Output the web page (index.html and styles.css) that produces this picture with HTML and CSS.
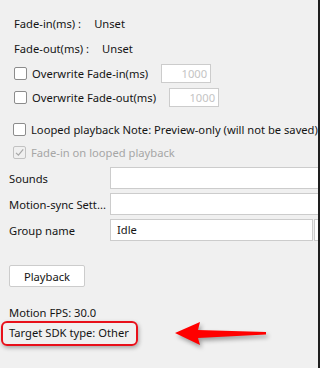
FILE: index.html
```html
<!DOCTYPE html>
<html lang="en">
<head>
  <meta charset="UTF-8">
  <meta name="viewport" content="width=device-width, initial-scale=1.0">
  <title>Motion settings</title>
  <link rel="stylesheet" href="styles.css">
</head>
<body>
  <div class="window">
    <div class="info-row"><span class="info-label">Fade-in(ms) :</span><span>Unset</span></div>
    <div class="info-row"><span class="info-label">Fade-out(ms) :</span><span>Unset</span></div>

    <div class="check-row">
      <span class="check"></span>
      <span class="check-label">Overwrite Fade-in(ms)</span>
      <span class="num-input">1000</span>
    </div>
    <div class="check-row">
      <span class="check"></span>
      <span class="check-label">Overwrite Fade-out(ms)</span>
      <span class="num-input">1000</span>
    </div>

    <div class="option-rows">
      <div class="option-row">
        <span class="check"></span>
        <span class="check-label">Looped playback Note: Preview-only (will not be saved)</span>
      </div>
      <div class="option-row disabled">
        <span class="check checked">
          <svg width="11" height="11" viewBox="0 0 11 11"><path d="M2 5.8l2.4 2.4L9.2 2.4" fill="none" stroke="#a8a8a8" stroke-width="1.2"/></svg>
        </span>
        <span class="check-label">Fade-in on looped playback</span>
      </div>
    </div>

    <div class="fields">
      <div class="field-row">
        <span class="field-label">Sounds</span>
        <span class="field-input"></span>
      </div>
      <div class="field-row">
        <span class="field-label">Motion-sync Sett...</span>
        <span class="field-input"></span>
      </div>
      <div class="field-row">
        <span class="field-label">Group name</span>
        <span class="field-input combo">Idle</span>
        <span class="combo-button"></span>
      </div>
    </div>

    <button class="playback-button">Playback</button>

    <div class="stats">
      <div class="stat-line">Motion FPS: 30.0</div>
      <div class="stat-line target">Target SDK type: Other
        <span class="highlight"></span>
      </div>
    </div>

    <svg class="arrow" width="100" height="34" viewBox="0 0 100 34">
      <path d="M5 15 L30 4 L28 12 L96 14 L96 16.5 L28 20 L30 27 Z" fill="#ff0000"/>
    </svg>
  </div>
</body>
</html>
```

FILE: styles.css
```css
* {
  margin: 0;
  padding: 0;
  box-sizing: border-box;
}

body {
  background: #f0f0f0;
  font-family: "Noto Sans", "Open Sans", sans-serif;
  font-size: 11.2px;
  color: #141414;
}

.window {
  position: relative;
  width: 320px;
  height: 368px;
  overflow: hidden;
  border-right: 2px solid #1e1e1e;
  padding-top: 11px;
}

.info-row {
  height: 25px;
  line-height: 25px;
  padding-left: 14px;
  white-space: nowrap;
}

.info-label {
  margin-right: 13px;
}

.check-row {
  display: flex;
  align-items: center;
  height: 24px;
  padding-left: 14px;
  white-space: nowrap;
}

.check {
  flex: none;
  width: 13px;
  height: 13px;
  border: 1px solid #8c8c8c;
  border-radius: 2px;
  background: #fff;
  display: flex;
  align-items: center;
  justify-content: center;
}

.check-label {
  margin-left: 5px;
}

.num-input {
  flex: none;
  width: 50px;
  height: 19px;
  margin-left: 13px;
  border: 1px solid #cccccc;
  background: #fff;
  color: #c4c4c4;
  text-align: right;
  line-height: 17px;
  padding-right: 3px;
}

.option-rows {
  margin-top: 9px;
  width: 318px;
  overflow: hidden;
}

.option-row {
  display: flex;
  align-items: center;
  height: 23px;
  padding-left: 13px;
  white-space: nowrap;
}

.option-row.disabled {
  color: #a6a6a6;
}

.check.checked {
  border-color: #c2c2c2;
  background: #f0f0f0;
}

.fields {
  margin-top: 3px;
  display: flex;
  flex-direction: column;
  gap: 4px;
}

.field-row {
  display: flex;
  align-items: center;
  height: 22px;
  padding-left: 9px;
  width: 340px;
  white-space: nowrap;
}

.field-label {
  flex: none;
  width: 101px;
}

.field-input {
  flex: 1;
  height: 22px;
  border: 1px solid #cccccc;
  background: #fff;
  line-height: 20px;
  padding-left: 6px;
}

.field-input.combo {
  flex: none;
  width: 203px;
}

.combo-button {
  flex: 1;
  height: 22px;
  margin-left: 1px;
  border: 1px solid #cccccc;
  background: #fff;
}

.playback-button {
  display: block;
  margin: 24px 0 0 9px;
  width: 76px;
  height: 22px;
  border: 1px solid #cccccc;
  border-radius: 2px;
  background: #fff;
  font-family: inherit;
  font-size: 11.2px;
  color: #141414;
}

.stats {
  margin-top: 16px;
  padding-left: 9px;
}

.stat-line {
  height: 20px;
  line-height: 20px;
  white-space: nowrap;
}

.target {
  position: relative;
}

.highlight {
  position: absolute;
  left: -8px;
  top: -2px;
  width: 137px;
  height: 25px;
  border: 2px solid #e8101a;
  border-radius: 6px;
  box-shadow: 1px 2px 4px rgba(0, 0, 0, 0.3);
}

.arrow {
  position: absolute;
  left: 170px;
  top: 318px;
  filter: drop-shadow(2px 3px 2px rgba(0, 0, 0, 0.35));
}
```
